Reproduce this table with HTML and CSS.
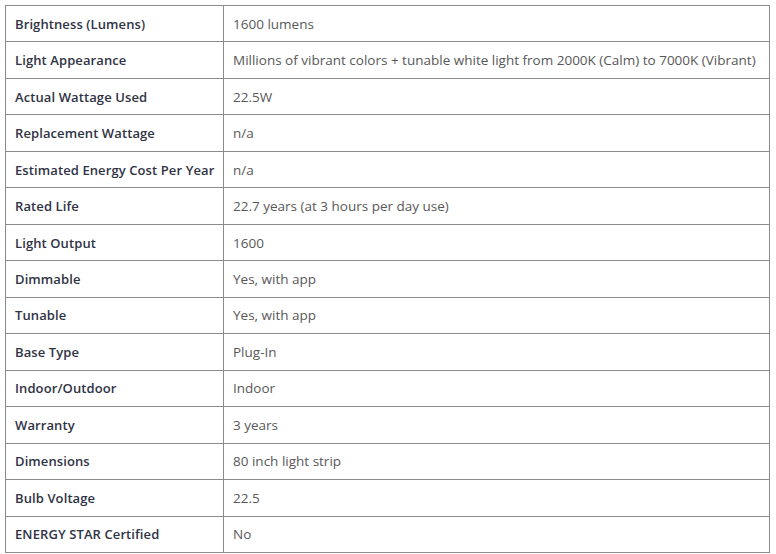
FILE: index.html
```html
<!DOCTYPE html>
<html lang="en">
<head>
<meta charset="utf-8">
<title>Specifications</title>
<link rel="stylesheet" href="styles.css">
</head>
<body>
<table class="specs">
  <tbody>
    <tr><th>Brightness (Lumens)</th><td>1600 lumens</td></tr>
    <tr><th>Light Appearance</th><td>Millions of vibrant colors + tunable white light from 2000K (Calm) to 7000K (Vibrant)</td></tr>
    <tr><th>Actual Wattage Used</th><td>22.5W</td></tr>
    <tr><th>Replacement Wattage</th><td>n/a</td></tr>
    <tr><th>Estimated Energy Cost Per Year</th><td>n/a</td></tr>
    <tr><th>Rated Life</th><td>22.7 years (at 3 hours per day use)</td></tr>
    <tr><th>Light Output</th><td>1600</td></tr>
    <tr><th>Dimmable</th><td>Yes, with app</td></tr>
    <tr><th>Tunable</th><td>Yes, with app</td></tr>
    <tr><th>Base Type</th><td>Plug-In</td></tr>
    <tr><th>Indoor/Outdoor</th><td>Indoor</td></tr>
    <tr><th>Warranty</th><td>3 years</td></tr>
    <tr><th>Dimensions</th><td>80 inch light strip</td></tr>
    <tr><th>Bulb Voltage</th><td>22.5</td></tr>
    <tr><th>ENERGY STAR Certified</th><td>No</td></tr>
  </tbody>
</table>
</body>
</html>
```
FILE: styles.css
```css
html, body {
  margin: 0;
  padding: 0;
  background: #ffffff;
}
body {
  padding: 5px 6px 0 5px;
  font-family: "Open Sans", "Noto Sans", sans-serif;
  font-size: 13.5px;
}
.specs {
  width: 765px;
  border-collapse: collapse;
  table-layout: fixed;
}
.specs tr {
  height: 36.47px;
}
.specs th,
.specs td {
  border: 1px solid #8c8c8c;
  padding: 0 9px;
  text-align: left;
  vertical-align: middle;
  line-height: 16px;
  white-space: nowrap;
}
.specs th {
  width: 199px;
  font-size: 13px;
  font-weight: 600;
  letter-spacing: 0.1px;
  color: #2f3344;
}
.specs td {
  font-weight: 400;
  color: #585858;
}
```
